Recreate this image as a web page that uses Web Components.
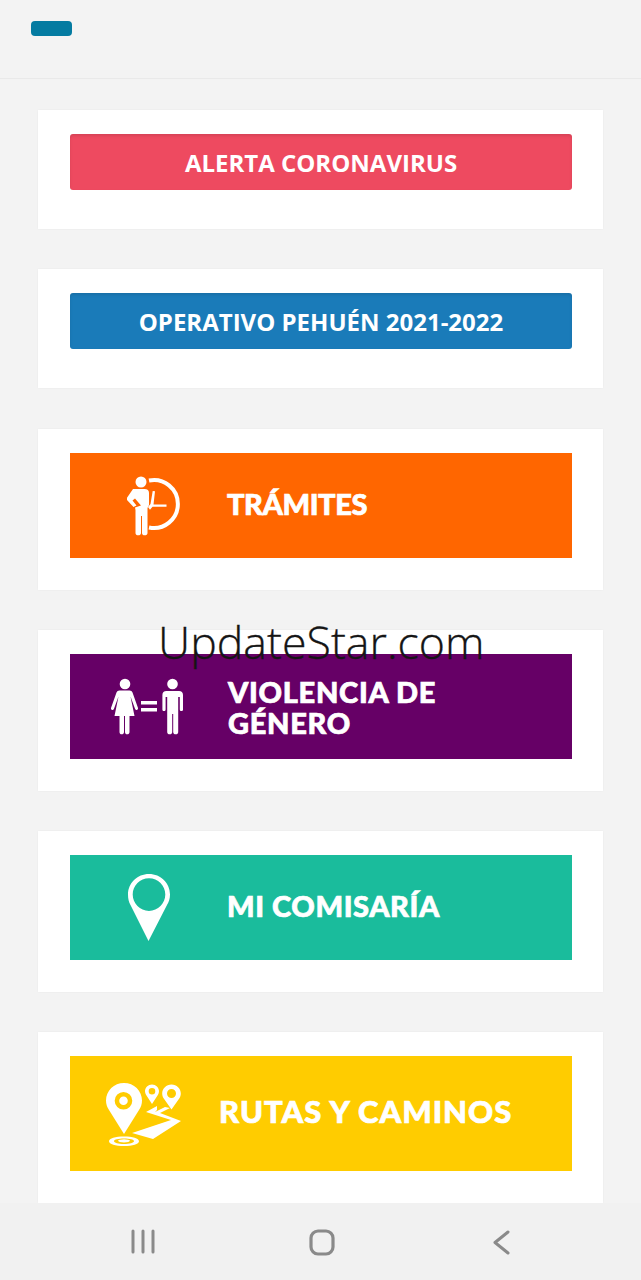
<!DOCTYPE html>
<html>
<head>
<meta charset="utf-8">
<style>
  html, body { margin: 0; height: 100%; }
  body { background: #f3f3f3; font-family: "Open Sans", sans-serif; overflow: hidden; }
  #app { display: flex; flex-direction: column; height: 1280px; position: relative; }
  #list { flex: 1; min-height: 0; overflow: hidden; display: flex; flex-direction: column; gap: 40px; padding: 31px 38px 0; }
</style>
</head>
<body>
<div id="app">
  <app-header></app-header>
  <div id="list">
    <menu-card compact>
      <alert-button color="#ee4a60">ALERTA CORONAVIRUS</alert-button>
    </menu-card>
    <menu-card compact style="margin-bottom:1px">
      <alert-button color="#1a7bb9">OPERATIVO PEHUÉN 2021-2022</alert-button>
    </menu-card>
    <menu-card>
      <feature-banner color="#ff6600" text-left="157" style="--track:-.4px;--lift:5px">
        <svg slot="icon" style="margin-left:57px" width="54" height="60" viewBox="127 476 54 60">
          <circle cx="141" cy="482" r="5.500" fill="#fff"/>
          <path d="M149 480.500A24 24 0 1 1 149 527.500" fill="none" stroke="#fff" stroke-width="4"/>
          <path d="M133 489h11.500c3 0 4.500 1.500 4.500 4v12l-1.500 3v25c0 1.500-1.200 2.300-2.800 2.300s-2.700-.8-2.700-2.300v-17h-1v17c0 1.500-1.200 2.300-2.800 2.300s-2.700-.8-2.700-2.300v-23l-.5-2.500 6-2-6-7-2.500 2 4 5-3 1.500-6.500-7c-.5-.8-.5-1.500 0-2.200z" fill="#fff"/>
          <path d="M148 507l2.500-3 2.200-13 2.300.3-1.500 13.200h13v2.300h-14l-2.500 3z" fill="#fff"/>
        </svg>
        TRÁMITES
      </feature-banner>
    </menu-card>
    <menu-card>
      <feature-banner color="#660066" text-left="158" style="--track:.7px">
        <svg slot="icon" style="margin-left:41px" width="73" height="58" viewBox="111 680 73 58">
          <circle cx="125" cy="686" r="5.300" fill="#fff"/>
          <path d="M120.500 692.500h9c1.500 0 2.500.8 3 2l5.500 15.500c.3 1-.2 1.600-1 1.900s-1.500-.1-1.900-1l-4.600-12.400 4 19.500h-5v16c0 1.500-1 2.300-2.300 2.300s-2.200-.8-2.200-2.300v-16h-1v16c0 1.500-1 2.300-2.300 2.300s-2.200-.8-2.200-2.300v-16h-5l4-19.500-4.600 12.400c-.4.900-1.100 1.300-1.900 1s-1.300-.9-1-1.900l5.500-15.500c.5-1.200 1.500-2 3-2z" fill="#fff"/>
          <rect x="141" y="703" width="16" height="3.500" fill="#fff"/>
          <rect x="141" y="710" width="16" height="3.500" fill="#fff"/>
          <circle cx="172.500" cy="686" r="5.300" fill="#fff"/>
          <path d="M166 693h13c2.500 0 4 1.600 4 4v14.500c0 1-.7 1.500-1.600 1.500s-1.600-.5-1.600-1.500V699h-1.600v35c0 1.500-1 2.300-2.500 2.300s-2.500-.8-2.500-2.300v-18h-1v18c0 1.500-1 2.300-2.500 2.300s-2.500-.8-2.500-2.300v-35h-1.600v12.500c0 1-.7 1.500-1.600 1.500s-1.600-.5-1.600-1.500V697c0-2.400 1.500-4 4-4z" fill="#fff"/>
        </svg>
        VIOLENCIA DE<br>GÉNERO
      </feature-banner>
    </menu-card>
    <menu-card>
      <feature-banner color="#1abc9c" text-left="157" style="--track:.6px;--lift:4px">
        <svg slot="icon" style="margin-left:57px" width="44" height="68" viewBox="127 873 44 68">
          <path fill-rule="evenodd" fill="#fff" d="M149 873c11.800 0 21 9.200 21 20.500 0 4-1.200 7.500-3 10.500L148.500 940 130.500 904c-1.700-3-2.500-6.500-2.500-10.500 0-11.300 9.200-20.500 21-20.500zM149 877.300c-9 0-16.300 7.300-16.300 16.300s7.300 16.300 16.300 16.300 16.300-7.300 16.300-16.300-7.300-16.300-16.300-16.300z"/>
        </svg>
        MI COMISARÍA
      </feature-banner>
    </menu-card>
    <menu-card tall>
      <feature-banner color="#ffcc00" text-left="149" tall style="--track:1px;--size:31px;--lift:4px">
        <svg slot="icon" style="margin-left:36px" width="76" height="64" viewBox="106 1081 76 64">
          <path fill="#fff" fill-rule="evenodd" d="M124 1082c10 0 18 7.800 18 17.500 0 3.500-1 6.500-3 9.500l-15 24-15-24c-2-3-3-6-3-9.500 0-9.700 8-17.500 18-17.500zM123.500 1091a8.800 8.800 0 1 0 0 17.600 8.800 8.800 0 0 0 0-17.600zM123.500 1095.500a4.300 4.300 0 1 1 0 8.600 4.300 4.300 0 0 1 0-8.600z"/>
          <path fill="#fff" fill-rule="evenodd" d="M152 1083.500c3.900 0 7 3 7 6.800 0 1.300-.4 2.500-1 3.500l-6 9.200-6-9.200c-.6-1-1-2.200-1-3.500 0-3.800 3.100-6.800 7-6.800zM152 1087a3.300 3.300 0 1 0 0 6.600 3.300 3.300 0 0 0 0-6.600z"/>
          <path fill="#fff" fill-rule="evenodd" d="M171.500 1083.500c5.200 0 9.300 4 9.300 9 0 1.800-.5 3.300-1.400 4.700l-7.900 11.300-7.900-11.300c-.9-1.400-1.400-2.900-1.400-4.700 0-5 4.100-9 9.300-9zM171.500 1088a4.500 4.500 0 1 0 0 9 4.500 4.500 0 0 0 0-9z"/>
          <path fill="#fff" fill-rule="evenodd" d="M124 1135.500c8.500 0 15 2 15 4.700s-6.500 4.800-15 4.800-15-2.100-15-4.800 6.500-4.700 15-4.700zM124 1137.600c-5.500 0-10 1.100-10 2.600s4.500 2.700 10 2.700 10-1.200 10-2.700-4.500-2.600-10-2.600z"/>
          <ellipse cx="124" cy="1139.800" rx="6" ry="1.600" fill="#fff"/>
          <path fill="#fff" d="M157 1105l-11 6 25 8-39 13 21 6 28-18-21-8 10-5-5-1-10 5 2-2z"/>
        </svg>
        RUTAS Y CAMINOS
      </feature-banner>
    </menu-card>
  </div>
  <nav-bar></nav-bar>
  <water-mark>UpdateStar.com</water-mark>
</div>

<script>
class AppHeader extends HTMLElement {
  connectedCallback() {
    const shadow = this.attachShadow({ mode: "open" });
    shadow.innerHTML = `
      <style>
        :host { display: block; flex: none; height: 57px; border-bottom: 1px solid #e9e9e9; padding: 21px 31px 0; }
        .toggle { width: 41px; height: 15px; border-radius: 4px; background: #047ba1; }
      </style>
      <div class="toggle"></div>
    `;
  }
}

class MenuCard extends HTMLElement {
  connectedCallback() {
    const shadow = this.attachShadow({ mode: "open" });
    shadow.innerHTML = `
      <style>
        :host { display: block; flex: none; background: #fff; padding: 24px 31px 32px 32px; box-shadow: 0 0 2px rgba(0,0,0,.05); }
        :host([compact]) { padding-bottom: 39px; }
      </style>
      <slot></slot>
    `;
  }
}

class AlertButton extends HTMLElement {
  connectedCallback() {
    const shadow = this.attachShadow({ mode: "open" });
    shadow.innerHTML = `
      <style>
        :host { display: flex; align-items: center; justify-content: center; height: 56px; border-radius: 3px; color: #fff; font: 700 24px "Open Sans", sans-serif; background: var(--bg); box-shadow: inset 0 2px 3px rgba(0,0,0,.1); }
      </style>
      <slot></slot>
    `;
    this.style.setProperty("--bg", this.getAttribute("color"));
  }
}

class FeatureBanner extends HTMLElement {
  connectedCallback() {
    const shadow = this.attachShadow({ mode: "open" });
    shadow.innerHTML = `
      <style>
        :host { display: grid; grid-template-columns: var(--left) 1fr; align-items: center; height: 105px; background: var(--bg); color: #fff; }
        :host([tall]) { height: 115px; }
        ::slotted(svg) { display: block; }
        .label { font: 900 var(--size, 29px)/31px Lato, sans-serif; letter-spacing: var(--track, 0); -webkit-text-stroke: .7px #fff; padding-bottom: var(--lift, 0); }
      </style>
      <slot name="icon"></slot>
      <div class="label"><slot></slot></div>
    `;
    this.style.setProperty("--bg", this.getAttribute("color"));
    this.style.setProperty("--left", this.getAttribute("text-left") + "px");
  }
}

class NavBar extends HTMLElement {
  connectedCallback() {
    const shadow = this.attachShadow({ mode: "open" });
    shadow.innerHTML = `
      <style>
        :host { display: grid; grid-template-columns: 286px 100px 1fr; flex: none; height: 77px; background: #f1f1f1; }
        svg { display: block; margin-top: 26px; }
      </style>
      <svg style="margin-left:130px" width="26" height="26" viewBox="130 1229 26 26" fill="none" stroke="#8a8a8a" stroke-width="3" stroke-linecap="round">
        <path d="M133 1231v21M143 1231v21M153 1231v21"/>
      </svg>
      <svg style="margin-left:22px" width="28" height="28" viewBox="308 1229 28 28" fill="none" stroke="#8a8a8a" stroke-width="3.200">
        <rect x="311" y="1231" width="22" height="23" rx="7"/>
      </svg>
      <svg style="margin-left:107px" width="18" height="28" viewBox="493 1229 18 28" fill="none" stroke="#8a8a8a" stroke-width="3" stroke-linecap="round" stroke-linejoin="round">
        <path d="M508 1232l-13 10.500 13 10.500"/>
      </svg>
    `;
  }
}

class WaterMark extends HTMLElement {
  connectedCallback() {
    const shadow = this.attachShadow({ mode: "open" });
    shadow.innerHTML = `
      <style>
        :host { position: absolute; left: 158px; top: 612px; color: #151515; font: 300 44.700px/60px "Open Sans", sans-serif; white-space: nowrap; -webkit-text-stroke: .3px #151515; }
      </style>
      <slot></slot>
    `;
  }
}

customElements.define("app-header", AppHeader);
customElements.define("menu-card", MenuCard);
customElements.define("alert-button", AlertButton);
customElements.define("feature-banner", FeatureBanner);
customElements.define("nav-bar", NavBar);
customElements.define("water-mark", WaterMark);
</script>
</body>
</html>
